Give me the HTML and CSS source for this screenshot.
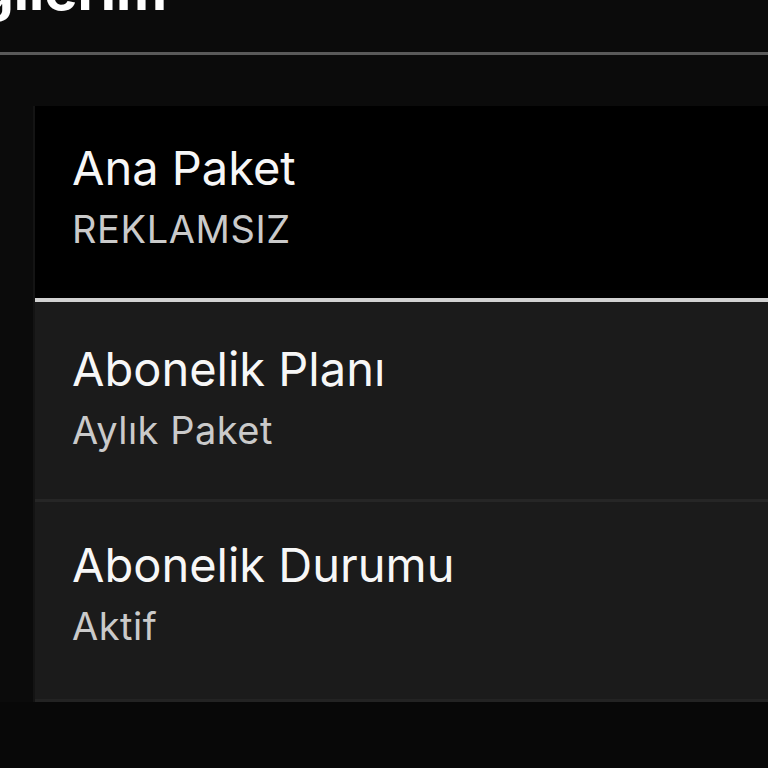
FILE: index.html
```html
<!DOCTYPE html>
<html lang="tr">
<head>
<meta charset="utf-8">
<title>Paket Bilgilerim</title>
<link rel="stylesheet" href="styles.css">
</head>
<body>
<div class="page">
  <header class="header">
    <h1 class="title">Paket Bilgilerim</h1>
  </header>
  <section class="content">
    <div class="card">
      <div class="row row-main">
        <div class="row-title">Ana Paket</div>
        <div class="row-sub caps">REKLAMSIZ</div>
      </div>
      <div class="row row-mid">
        <div class="row-title">Abonelik Planı</div>
        <div class="row-sub">Aylık Paket</div>
      </div>
      <div class="row row-last">
        <div class="row-title">Abonelik Durumu</div>
        <div class="row-sub">Aktif</div>
      </div>
    </div>
  </section>
</div>
</body>
</html>
```
FILE: styles.css
```css
html, body {
  margin: 0;
  padding: 0;
  background: #080808;
  overflow: hidden;
}
body {
  font-family: "Inter", "Noto Sans", sans-serif;
  color: #f4f4f4;
  width: 768px;
  height: 768px;
}
.page {
  display: flex;
  flex-direction: column;
}
.header {
  height: 52px;
  background: #0b0b0b;
  border-bottom: 3px solid #5a5a5a;
  display: flex;
  justify-content: flex-start;
}
.title {
  margin: -44px 0 0 -433px;
  width: 600px;
  font-size: 56px;
  line-height: 68px;
  font-weight: 700;
  color: #ffffff;
  white-space: nowrap;
  text-align: right;
}
.content {
  background: #0b0b0b;
  padding: 51px 0 0 33px;
}
.card {
  display: flex;
  flex-direction: column;
  border-left: 2px solid #141414;
  background: #1b1b1b;
}
.row {
  display: flex;
  flex-direction: column;
  gap: 10px;
  padding-left: 37px;
  background: #1b1b1b;
  border-bottom: 3px solid #262626;
}
.row-main {
  background: #000000;
  padding-top: 33px;
  padding-bottom: 46px;
  border-bottom: 4px solid #d2d2d2;
}
.row-mid {
  padding-top: 38px;
  padding-bottom: 46px;
}
.row-last {
  padding-top: 34px;
  padding-bottom: 50px;
  border-bottom: 3px solid #232323;
}
.row-title {
  font-size: 47px;
  line-height: 57px;
  font-weight: 400;
  color: #f7f7f7;
  white-space: nowrap;
}
.row-sub {
  font-size: 38px;
  line-height: 46px;
  color: #cacaca;
  letter-spacing: 0.5px;
  white-space: nowrap;
}
.caps {
  letter-spacing: 0.6px;
}
```
